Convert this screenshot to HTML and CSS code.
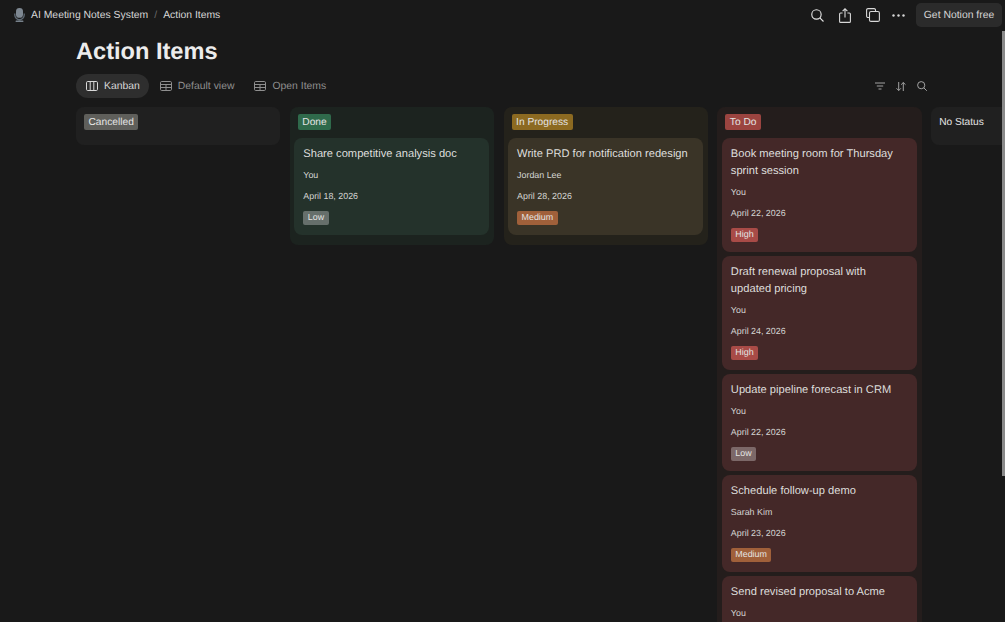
FILE: index.html
```html
<!DOCTYPE html>
<html lang="en">
<head>
    <meta charset="UTF-8">
    <meta name="viewport" content="width=device-width, initial-scale=1.0">
    <title>Action Items</title>
    <link rel="stylesheet" href="styles.css">
</head>
<body>
    <header class="topbar">
        <div class="crumbs">
            <svg class="mic" width="11" height="14" viewBox="0 0 11 14">
                <rect x="2" y="0" width="7" height="9.8" rx="3.4" fill="#7d8791"/>
                <path d="M0.8 5.5v1.5a4.7 4.7 0 0 0 9.4 0V5.5" fill="none" stroke="#5f6a75" stroke-width="1.3"/>
                <rect x="4.5" y="11" width="2" height="1.6" fill="#5f6a75"/>
                <rect x="1.6" y="12.4" width="7.8" height="1.6" rx="0.5" fill="#77818b"/>
            </svg>
            <span>AI Meeting Notes System</span>
            <span class="slash">/</span>
            <span>Action Items</span>
        </div>
        <div class="actions">
            <svg class="act-search" width="13" height="13" viewBox="0 0 15 15" fill="none" stroke="#e6e6e6" stroke-width="1.3">
                <circle cx="6.3" cy="6.3" r="5.4"/>
                <path d="M10.2 10.2l4.2 4.2"/>
            </svg>
            <svg class="act-share" width="12" height="15" viewBox="0 0 12 15" fill="none" stroke="#d8d8d8" stroke-width="1.1">
                <path d="M3.6 5H1.6a1 1 0 0 0-1 1v7.4a1 1 0 0 0 1 1h8.8a1 1 0 0 0 1-1V6a1 1 0 0 0-1-1H8.4"/>
                <path d="M6 9.5V1M3.6 3.2L6 .8l2.4 2.4"/>
            </svg>
            <svg class="act-copy" width="14" height="14" viewBox="0 0 14 14" fill="none" stroke="#d8d8d8" stroke-width="1.1">
                <path d="M3 9.5H2a1.4 1.4 0 0 1-1.4-1.4V2A1.4 1.4 0 0 1 2 .6h6A1.4 1.4 0 0 1 9.5 2v1"/>
                <rect x="3.5" y="3.5" width="9.9" height="9.9" rx="1.5"/>
            </svg>
            <svg class="act-more" width="13" height="3" viewBox="0 0 13 3" fill="#d8d8d8">
                <circle cx="1.5" cy="1.5" r="1.2"/>
                <circle cx="6.5" cy="1.5" r="1.2"/>
                <circle cx="11.5" cy="1.5" r="1.2"/>
            </svg>
            <button class="get-btn">Get Notion free</button>
        </div>
    </header>

    <main class="page">
        <h1>Action Items</h1>
        <div class="tabs-row">
            <div class="tabs">
                <div class="tab active">
                    <svg width="12" height="10" viewBox="0 0 12 10" fill="none" stroke="currentColor" stroke-width="1">
                        <rect x="0.5" y="0.5" width="11" height="9" rx="1.2"/>
                        <path d="M4.2 0.5v9M7.8 0.5v9"/>
                    </svg>
                    Kanban
                </div>
                <div class="tab">
                    <svg width="12" height="10" viewBox="0 0 12 10" fill="none" stroke="currentColor" stroke-width="1">
                        <rect x="0.5" y="0.5" width="11" height="9" rx="1.2"/>
                        <path d="M0.5 3.5h11M0.5 6.5h11M6 3.5v6"/>
                    </svg>
                    Default view
                </div>
                <div class="tab">
                    <svg width="12" height="10" viewBox="0 0 12 10" fill="none" stroke="currentColor" stroke-width="1">
                        <rect x="0.5" y="0.5" width="11" height="9" rx="1.2"/>
                        <path d="M0.5 3.5h11M0.5 6.5h11M6 3.5v6"/>
                    </svg>
                    Open Items
                </div>
            </div>
            <div class="tools">
                <svg width="10" height="8" viewBox="0 0 10 8" fill="none" stroke="#a3a3a3" stroke-width="1">
                    <path d="M0 1h10M1.8 4h6.4M3.5 7h3"/>
                </svg>
                <svg width="10" height="9" viewBox="0 0 10 9" fill="none" stroke="#a3a3a3" stroke-width="1">
                    <path d="M2.7 0v8.5M0.5 6.3l2.2 2.2 2.2-2.2M7.3 9V.5M5.1 2.7L7.3.5l2.2 2.2"/>
                </svg>
                <svg width="10" height="10" viewBox="0 0 10 10" fill="none" stroke="#a3a3a3" stroke-width="1">
                    <circle cx="4.2" cy="4.2" r="3.6"/>
                    <path d="M6.8 6.8l3 3"/>
                </svg>
            </div>
        </div>

        <div class="board">
            <section class="column col-grey">
                <div class="col-head"><span class="status st-grey">Cancelled</span></div>
            </section>

            <section class="column col-green">
                <div class="col-head"><span class="status st-green">Done</span></div>
                <article class="card">
                    <div class="card-title">Share competitive analysis doc</div>
                    <div class="meta">You</div>
                    <div class="meta">April 18, 2026</div>
                    <span class="pill p-low">Low</span>
                </article>
            </section>

            <section class="column col-yellow">
                <div class="col-head"><span class="status st-yellow">In Progress</span></div>
                <article class="card">
                    <div class="card-title">Write PRD for notification redesign</div>
                    <div class="meta">Jordan Lee</div>
                    <div class="meta">April 28, 2026</div>
                    <span class="pill p-med">Medium</span>
                </article>
            </section>

            <section class="column col-red">
                <div class="col-head"><span class="status st-red">To Do</span></div>
                <article class="card">
                    <div class="card-title">Book meeting room for Thursday sprint session</div>
                    <div class="meta">You</div>
                    <div class="meta">April 22, 2026</div>
                    <span class="pill p-high">High</span>
                </article>
                <article class="card">
                    <div class="card-title">Draft renewal proposal with updated pricing</div>
                    <div class="meta">You</div>
                    <div class="meta">April 24, 2026</div>
                    <span class="pill p-high">High</span>
                </article>
                <article class="card">
                    <div class="card-title">Update pipeline forecast in CRM</div>
                    <div class="meta">You</div>
                    <div class="meta">April 22, 2026</div>
                    <span class="pill p-low">Low</span>
                </article>
                <article class="card">
                    <div class="card-title">Schedule follow-up demo</div>
                    <div class="meta">Sarah Kim</div>
                    <div class="meta">April 23, 2026</div>
                    <span class="pill p-med">Medium</span>
                </article>
                <article class="card">
                    <div class="card-title">Send revised proposal to Acme</div>
                    <div class="meta">You</div>
                </article>
            </section>

            <section class="column col-none">
                <div class="col-head"><span class="status st-none">No Status</span></div>
            </section>
        </div>
    </main>

    <div class="scroll-thumb"></div>
</body>
</html>
```

FILE: styles.css
```css
* {
    margin: 0;
    padding: 0;
    box-sizing: border-box;
}

html, body {
    height: 622px;
    overflow: hidden;
}

body {
    font-family: "Liberation Sans", Arial, sans-serif;
    background-color: #191919;
    color: #e8e8e6;
    text-rendering: geometricPrecision;
}

/* top bar */
.topbar {
    height: 30px;
    display: flex;
    justify-content: space-between;
    align-items: center;
    padding: 0 3px 0 14px;
}

.crumbs {
    display: flex;
    align-items: center;
    font-size: 10.4px;
    color: #d6d6d6;
}

.mic {
    margin-right: 6px;
}

.slash {
    color: #6a6a6a;
    margin: 0 6px;
}

.actions {
    display: flex;
    align-items: center;
}

.act-search { margin-right: 15px; }
.act-share { margin-right: 15px; }
.act-copy { margin-right: 12px; }
.act-more { margin-right: 11px; }

.get-btn {
    width: 86px;
    height: 24px;
    background-color: #2b2b2b;
    border: none;
    border-radius: 5px;
    color: #d6d6d6;
    font-family: inherit;
    font-size: 10.4px;
    text-rendering: geometricPrecision;
}

/* page */
.page {
    padding-left: 76px;
}

h1 {
    font-size: 23.6px;
    line-height: 30px;
    font-weight: 700;
    color: #ececec;
    margin-top: 7px;
}

.tabs-row {
    width: 851px;
    display: flex;
    justify-content: space-between;
    align-items: center;
    margin-top: 7px;
}

.tabs {
    display: flex;
    height: 24px;
}

.tab {
    display: flex;
    align-items: center;
    gap: 6px;
    padding: 0 9px 0 10px;
    margin-right: 1px;
    border-radius: 12px;
    font-size: 10.4px;
    color: #8f8f8f;
}

.tab.active {
    background-color: #2e2e2e;
    color: #d8d8d8;
}

.tools {
    display: flex;
    align-items: center;
    gap: 11px;
}

/* board */
.board {
    display: flex;
    align-items: flex-start;
    gap: 9.6px;
    margin-top: 9px;
}

.column {
    flex: 0 0 204.2px;
    border-radius: 8px;
    padding: 7px 4.5px 10px;
}

.col-head {
    height: 24px;
    padding-left: 3.5px;
}

.col-grey { background-color: #202020; padding-bottom: 7px; }
.col-green { background-color: #1c231f; }
.col-yellow { background-color: #24221b; }
.col-red { background-color: #241d1c; }
.col-none { background-color: #202020; padding-bottom: 7px; }

.status {
    display: block;
    width: fit-content;
    height: 16px;
    line-height: 17px;
    padding: 0 4.5px;
    border-radius: 2px;
    font-size: 10.2px;
    color: #e4e4e4;
}

.st-grey { background-color: #5f5f5b; }
.st-green { background-color: #2f6a4b; }
.st-yellow { background-color: #8c6a21; }
.st-red { background-color: #9b4440; }
.st-none { padding-left: 0; }

/* cards */
.card {
    border-radius: 8px;
    padding: 8px 9px 10.4px;
    margin-bottom: 4px;
}

.column > .card:last-child { margin-bottom: 0; }

.col-green .card { background-color: #24322b; }
.col-yellow .card { background-color: #3a3427; }
.col-red .card { background-color: #442828; }

.card-title {
    font-size: 11.15px;
    line-height: 16.8px;
    color: #dededc;
    margin-bottom: 2px;
}

.meta {
    font-size: 8.9px;
    line-height: 21px;
    color: #d4d4d2;
}

.pill {
    display: block;
    width: fit-content;
    height: 14px;
    line-height: 13px;
    margin-top: 4px;
    padding: 0 4.5px;
    border-radius: 2px;
    font-size: 8.9px;
    color: #e4e4e2;
}

.p-low { background-color: rgba(255, 255, 255, 0.3); }
.p-med { background-color: #a0603a; }
.p-high { background-color: #a84b47; }

/* fake page scrollbar */
.scroll-thumb {
    position: absolute;
    top: 31px;
    right: 0;
    width: 3px;
    height: 445px;
    background-color: #8a8a8a;
}
```
